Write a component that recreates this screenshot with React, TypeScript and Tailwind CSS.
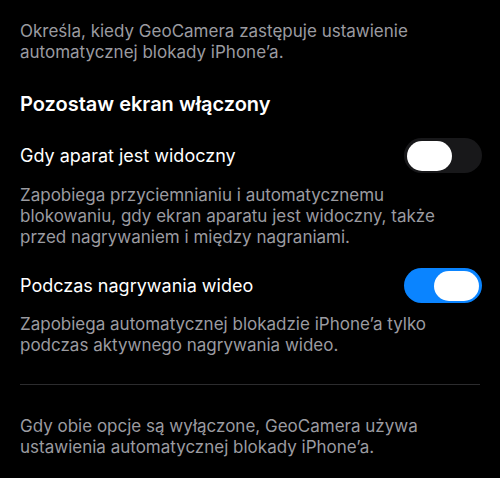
import React from "react";

function Toggle({ on }: { on: boolean }) {
  return (
    <div
      className={`-mr-[2px] flex h-[35px] w-[78px] shrink-0 items-center rounded-full px-[3px] ${
        on ? "justify-end bg-[#0a84ff]" : "justify-start bg-[#18181a]"
      }`}
    >
      <div className="h-[30px] w-[45px] rounded-full bg-white" />
    </div>
  );
}

export default function App() {
  return (
    <div
      className="h-[478px] w-[500px] overflow-hidden bg-black px-5"
      style={{ fontFamily: "Inter, 'Noto Sans', sans-serif" }}
    >
      <p className="pt-[21px] text-[17px] leading-[21px] text-[#9b9ba0]">
        Określa, kiedy GeoCamera zastępuje ustawienie automatycznej blokady iPhone’a.
      </p>

      <h2 className="mt-[28px] text-[20px] font-semibold leading-[26px] text-white">
        Pozostaw ekran włączony
      </h2>

      <div className="mt-[21px] flex items-center justify-between">
        <span className="text-[18px] leading-[24px] text-white">Gdy aparat jest widoczny</span>
        <Toggle on={false} />
      </div>
      <p className="mt-[12px] text-[17px] leading-[21px] text-[#9b9ba0]">
        Zapobiega przyciemnianiu i automatycznemu blokowaniu, gdy ekran aparatu jest widoczny,
        także przed nagrywaniem i między nagraniami.
      </p>

      <div className="mt-[20px] flex items-center justify-between">
        <span className="text-[18px] leading-[24px] text-white">Podczas nagrywania wideo</span>
        <Toggle on={true} />
      </div>
      <p className="mt-[11px] text-[17px] leading-[21px] text-[#9b9ba0]">
        Zapobiega automatycznej blokadzie iPhone’a tylko podczas aktywnego nagrywania wideo.
      </p>

      <div className="mt-[28px] h-px bg-[#2c2c2e]" />

      <p className="mt-[31px] text-[17px] leading-[21px] text-[#9b9ba0]">
        Gdy obie opcje są wyłączone, GeoCamera używa ustawienia automatycznej blokady iPhone’a.
      </p>
    </div>
  );
}
